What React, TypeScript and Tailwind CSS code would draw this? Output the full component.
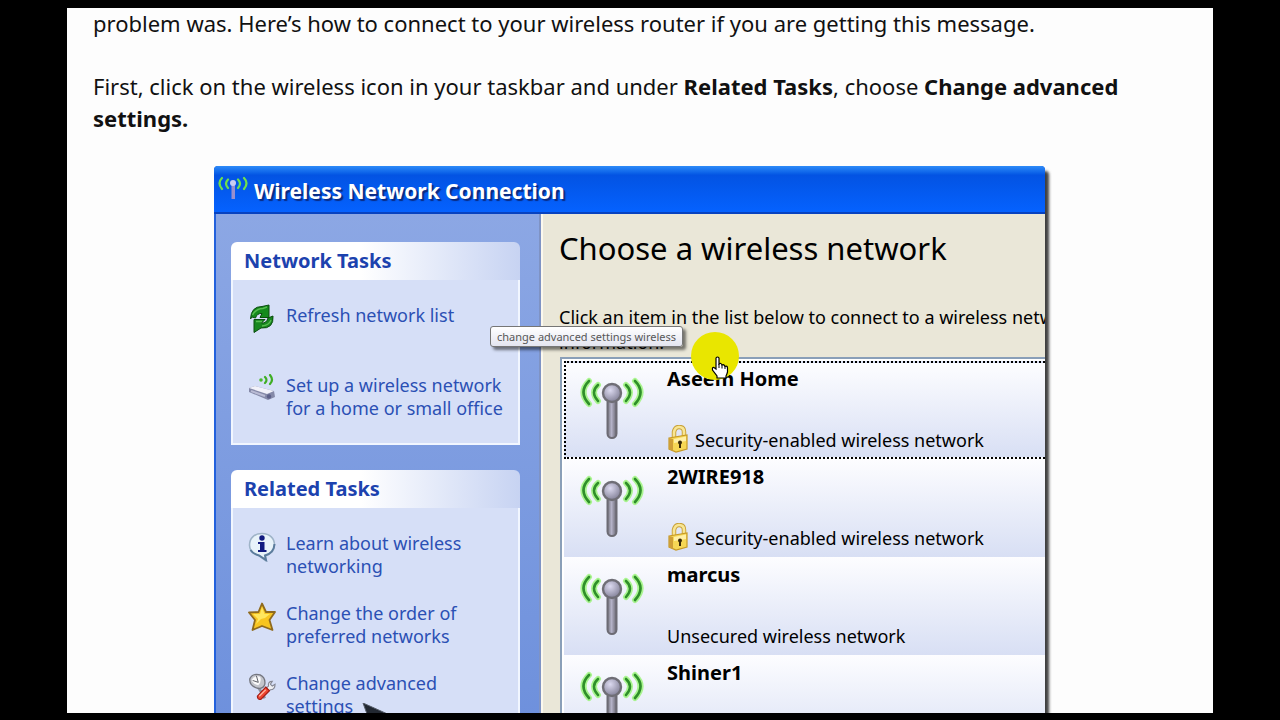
import type { ReactNode } from "react";

function Antenna() {
  return (
    <svg viewBox="0 0 64 66" className="h-[66px] w-16 shrink-0" aria-hidden="true">
      <defs>
        <linearGradient id="pole" x1="0" x2="1" y1="0" y2="0">
          <stop offset="0" stopColor="#76767f" />
          <stop offset="0.45" stopColor="#b4b2c8" />
          <stop offset="1" stopColor="#67656f" />
        </linearGradient>
        <radialGradient id="ball" cx="0.4" cy="0.35" r="0.65">
          <stop offset="0" stopColor="#dcdaf0" />
          <stop offset="1" stopColor="#85839a" />
        </radialGradient>
      </defs>
      <g fill="none" stroke="#8cf563" strokeWidth="6" strokeLinecap="round" opacity="0.7">
        <path d="M9 7Q-2 18 9 30M18 11Q10 18 18 27M46 11Q54 18 46 27M55 7Q66 18 55 30" />
      </g>
      <g fill="none" stroke="#2f8f2a" strokeWidth="2.6" strokeLinecap="round">
        <path d="M9 7Q-2 18 9 30M18 11Q10 18 18 27M46 11Q54 18 46 27M55 7Q66 18 55 30" />
      </g>
      <rect x="27.5" y="24" width="9" height="40" rx="4.5" fill="url(#pole)" stroke="#6c6b74" strokeWidth="2" />
      <circle cx="32" cy="19" r="9" fill="url(#ball)" stroke="#6f6e76" strokeWidth="2.4" />
    </svg>
  );
}

function TitleAntenna() {
  return (
    <svg viewBox="0 0 30 26" className="h-[26px] w-[30px] shrink-0" aria-hidden="true">
      <g fill="none" stroke="#6fe04c" strokeWidth="2.2" strokeLinecap="round">
        <path d="M4 2Q-1 7 4 13M10 3.500Q6 7.500 10 12M20 3.500Q24 7.500 20 12M26 2Q31 7 26 13" />
      </g>
      <rect x="13.500" y="8" width="3.500" height="15" fill="#9a8fce" />
      <circle cx="15" cy="7" r="3" fill="#c9cdf2" />
    </svg>
  );
}

function Lock() {
  return (
    <svg viewBox="0 0 22 30" className="h-[30px] w-[22px] shrink-0" aria-hidden="true">
      <path d="M7 14V7Q8 2 12 2Q17 2 17 7V12" fill="none" stroke="#c9a23a" strokeWidth="4.500" />
      <path d="M7 14V7Q8 2 12 2Q17 2 17 7V12" fill="none" stroke="#f8e694" strokeWidth="2.600" />
      <path d="M2 13L20 10V24L9 27L2 24Z" fill="#f6d755" stroke="#c79a26" strokeWidth="1.2" />
      <path d="M2 13L6 14V26L2 24Z" fill="#cf9f36" />
      <path d="M7 14L19 11.500V16L7 18Z" fill="#fff0a6" />
      <circle cx="13" cy="17.500" r="2" fill="#3a2a08" />
      <rect x="12" y="17" width="2" height="6" fill="#3a2a08" />
    </svg>
  );
}

function RefreshIcon() {
  return (
    <svg viewBox="0 0 28 30" className="h-[30px] w-7" aria-hidden="true">
      <path d="M2.500 15Q3 2.500 14 2.500L21 1V13.500H12L14 9.500Q9 9 7.500 14L4 13Z" fill="#148a1c" stroke="#0a4d0e" />
      <path d="M25 12Q26 25 13 24L6 28.500V15.500H17L13.500 19Q18.500 19.500 20 14Z" fill="#17871f" stroke="#0a4d0e" />
      <path d="M4.500 11Q8 4.500 15 4.500L19 3" fill="none" stroke="#58bd50" strokeWidth="1.500" />
      <path d="M8 17.500H14M23 16Q21 21.500 14 22" fill="none" stroke="#58bd50" strokeWidth="1.300" />
    </svg>
  );
}

function RouterIcon() {
  return (
    <svg viewBox="0 0 28 30" className="h-[30px] w-7" aria-hidden="true">
      <g fill="none" stroke="#3fae24" strokeWidth="2.200" strokeLinecap="round">
        <path d="M17 3Q20 6 17 9M22 1Q26 6 22 10" />
      </g>
      <circle cx="13" cy="6" r="1.800" fill="#4dbb2e" />
      <path d="M1 14L7 12L26 17L27 23L20 26L1 18Z" fill="#8589a8" />
      <path d="M1 14L7 12L26 17L19 20Z" fill="#f2f2fa" />
      <circle cx="21" cy="22.500" r="2.200" fill="#5d6088" />
      <path d="M3 17L17 22" stroke="#b9bbd4" strokeWidth="2" />
    </svg>
  );
}

function InfoIcon() {
  return (
    <svg viewBox="0 0 28 30" className="h-[30px] w-7" aria-hidden="true">
      <path d="M14 1.500C6 1.500 1.500 6.500 1.500 13C1.500 18 5 22 11 23.500L17.500 28.500V23.500C23 22 26.500 18 26.500 13C26.500 6.500 22 1.500 14 1.500Z" fill="#e8f3fa" stroke="#9fb4c8" strokeWidth="1.600" />
      <path d="M26.500 12Q26 21 17 23.500L18 28L11 23.500Q5 22 2.500 18" fill="none" stroke="#5b7c9d" strokeWidth="2" />
      <circle cx="14" cy="6" r="2.700" fill="#111b80" />
      <path d="M10 10H16.500V18H18.500V20H10V18H12V12H10Z" fill="#111b80" />
    </svg>
  );
}

function StarIcon() {
  return (
    <svg viewBox="0 0 28 30" className="h-[30px] w-7" aria-hidden="true">
      <path d="M14 1.500L18 10H27L21.500 18L24.500 28L14 24L4.500 28L7 18L1 10.500L10.500 10Z" fill="#f8c520" stroke="#8f6a1e" strokeWidth="1.800" strokeLinejoin="round" />
      <path d="M14 5L16.500 12L22 12L17 16L13 17L8 22L10 17L5 12L12 12Z" fill="#ffe65e" />
    </svg>
  );
}

function ToolsIcon() {
  return (
    <svg viewBox="0 0 30 30" className="h-[30px] w-7" aria-hidden="true">
      <path d="M11 15L18 27" stroke="#8c8f9c" strokeWidth="3" />
      <path d="M2 6Q5 0 13 2Q19 5 18 12Q16 18 9 16Q1 13 2 6Z" fill="#c3c5cc" stroke="#74767f" strokeWidth="1.400" />
      <path d="M4 7Q8 2 13 4Q15 9 11 13Q5 12 4 7Z" fill="#fafafa" />
      <path d="M9 3L11 10L5 8" fill="none" stroke="#52545d" />
      <path d="M16 19L22 14Q21 9 26 9L24 12L26 14L29 12Q29 18 24 18L18 22Z" fill="#eff0f4" stroke="#858793" strokeWidth="1.200" />
      <path d="M19 15L23 19L14 28Q10 29 10 25Z" fill="#ef4430" stroke="#a31c15" strokeWidth="1.200" />
      <path d="M19 18L12 25" stroke="#ffb29c" strokeWidth="1.500" />
    </svg>
  );
}

function TaskLink({ icon, children }: { icon: ReactNode; children: ReactNode }) {
  return (
    <a href="#" className="flex items-start gap-[10px] text-[18px] leading-[23px] text-[#2b50b4]">
      <span className="w-7 shrink-0">{icon}</span>
      <span className="whitespace-nowrap">{children}</span>
    </a>
  );
}

function TaskGroup({ title, children }: { title: string; children: ReactNode }) {
  return (
    <section>
      <h2 className="flex h-[38px] items-center rounded-t-md bg-linear-to-r from-white from-45% to-[#c7d3f2] pl-[13px] text-[20px] font-bold text-[#1c42ae]">
        {title}
      </h2>
      <div className="flex flex-col gap-6 border-2 border-t-0 border-[#f1f6ff] bg-[#d6dff7] pt-6 pr-1 pb-[23px] pl-[15px]">
        {children}
      </div>
    </section>
  );
}

type Network = { name: string; secured: boolean };

const networks: Network[] = [
  { name: "Aseem Home", secured: true },
  { name: "2WIRE918", secured: true },
  { name: "marcus", secured: false },
  { name: "Shiner1", secured: false },
];

function NetworkRow({ network, focused }: { network: Network; focused: boolean }) {
  return (
    <li>
      <button
        type="button"
        className={
          "flex h-[98px] w-full gap-[23px] border-2 border-r-0 bg-linear-to-b from-[#fdfdff] to-[#d8dff4] pt-1 pl-[14px] text-left text-black " +
          (focused ? "border-dotted border-black" : "border-transparent bg-origin-border")
        }
      >
        <span className="pt-[7px]">
          <Antenna />
        </span>
        <span className="flex flex-col gap-[34px] whitespace-nowrap">
          <span className="text-[20px] leading-6 font-bold">{network.name}</span>
          <span className="flex h-[30px] items-center gap-[6px] text-[18px] leading-[30px]">
            {network.secured && <Lock />}
            {network.secured ? "Security-enabled wireless network" : "Unsecured wireless network"}
          </span>
        </span>
      </button>
    </li>
  );
}

function NetworkWindow() {
  return (
    <div className="mx-auto w-full max-w-[831px] rounded-t bg-[#0a50dc] font-['Noto_Sans','Open_Sans',sans-serif] shadow-[4px_5px_3px_rgba(0,0,0,0.75)]">
      <header className="flex h-12 items-center gap-[6px] rounded-t border-b-2 border-[#0742c0] bg-linear-to-b from-[#2e8bf8] via-[#0353e3] via-20% to-[#0562ff] pl-1">
        <TitleAntenna />
        <h1 className="pt-1 text-[21px] font-bold whitespace-nowrap text-white [text-shadow:2px_2px_1px_#0a2a80]">
          Wireless Network Connection
        </h1>
      </header>
      <div className="flex">
        <aside className="flex w-[327px] shrink-0 flex-col gap-[25px] border-r-2 border-l-2 border-r-[#7f93c4] border-l-[#2361dc] bg-linear-to-b from-[#8ca7e4] to-[#6c8fdc] pt-7 pr-[19px] pl-[15px]">
          <TaskGroup title="Network Tasks">
            <TaskLink icon={<RefreshIcon />}>Refresh network list</TaskLink>
            <div className="pt-4">
              <TaskLink icon={<RouterIcon />}>
                Set up a wireless network
                <br />
                for a home or small office
              </TaskLink>
            </div>
          </TaskGroup>
          <TaskGroup title="Related Tasks">
            <TaskLink icon={<InfoIcon />}>
              Learn about wireless
              <br />
              networking
            </TaskLink>
            <TaskLink icon={<StarIcon />}>
              Change the order of
              <br />
              preferred networks
            </TaskLink>
            <TaskLink icon={<ToolsIcon />}>
              Change advanced
              <br />
              settings
            </TaskLink>
          </TaskGroup>
        </aside>
        <section className="min-w-0 flex-1 overflow-hidden border-l-2 border-[#fbf8ee] bg-[#eae7d8] pl-4 text-black">
          <h2 className="pt-[15px] text-[31px] leading-[38px] whitespace-nowrap">Choose a wireless network</h2>
          <p className="pt-[38px] pb-[2px] text-[18px] leading-[25px] whitespace-nowrap">
            Click an item in the list below to connect to a wireless network in range or to get more
            <br />
            information.
          </p>
          <ul className="ml-px border-t-2 border-l-2 border-[#8a9fb8] bg-white pt-[2px] pl-[2px]">
            {networks.map((network, index) => (
              <NetworkRow key={network.name} network={network} focused={index === 0} />
            ))}
          </ul>
        </section>
      </div>
    </div>
  );
}

function HandCursor() {
  return (
    <div className="pointer-events-none absolute top-[332px] left-[691px] size-12 rounded-full bg-[#e9e600]" aria-hidden="true">
      <svg viewBox="0 0 18 24" className="absolute top-6 left-5 h-6 w-[18px]">
        <path d="M5 13V2Q6.500 0 8 2V8Q10 6.500 11 9Q13 8 14 10.500Q16.500 9.500 16.500 12V16Q16 18 15 20V22H6V20L1.500 14Q1 11 3 11.500Z" fill="white" stroke="black" strokeWidth="1.200" />
        <path d="M8 8V12M11 9V12.500M14 10.500V13" stroke="black" />
      </svg>
    </div>
  );
}

export default function App() {
  return (
    <div className="relative h-screen overflow-hidden bg-black px-[67px] pt-2 pb-[7px]">
      <main className="relative h-full overflow-hidden bg-[#fdfdfd] pr-[47px] pl-[26px] font-['Noto_Sans','Open_Sans',sans-serif] text-[22px] leading-8 text-[#111]">
        <p className="leading-[30px]">
          problem was. Here’s how to connect to your wireless router if you are getting this message.
        </p>
        <p className="pt-8 pb-8">
          First, click on the wireless icon in your taskbar and under <strong>Related Tasks</strong>, choose{" "}
          <strong>Change advanced settings.</strong>
        </p>
        <NetworkWindow />
        <svg viewBox="0 0 34 34" className="absolute top-[695px] left-[295px] size-[34px]" aria-hidden="true">
          <path d="M1 0L30 13L18 17L12 30Z" fill="#222831" stroke="#555c68" />
        </svg>
      </main>
      <div
        role="tooltip"
        className="absolute top-[326px] left-[490px] rounded-[3px] border border-[#767676] bg-linear-to-b from-white to-[#e4e5f0] px-[6px] text-[11px] leading-[19px] whitespace-nowrap text-[#575757] shadow-[3px_3px_3px_rgba(0,0,0,0.5)] font-['Noto_Sans','Open_Sans',sans-serif]"
      >
        change advanced settings wireless
      </div>
      <HandCursor />
    </div>
  );
}
